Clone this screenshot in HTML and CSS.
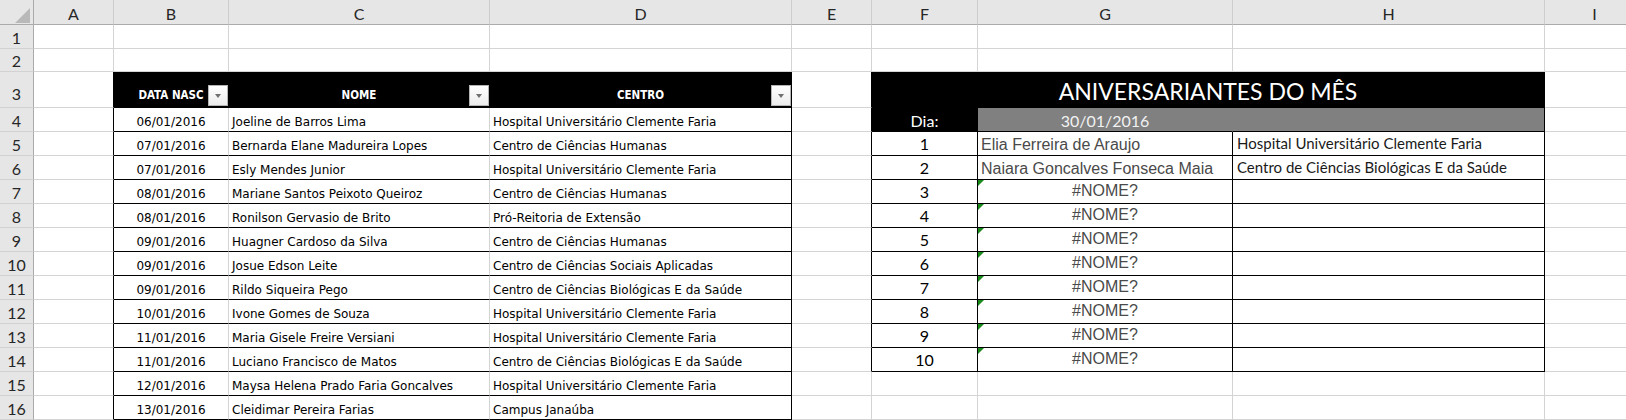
FILE: index.html
```html
<!DOCTYPE html>
<html lang="pt-BR">
<head>
    <meta charset="UTF-8">
    <meta name="viewport" content="width=device-width, initial-scale=1.0">
    <title>Aniversariantes do Mês</title>
    <link rel="stylesheet" href="styles.css">
</head>
<body>
    <div class="sheet">
        <div class="row head">
            <div class="cell corner"></div>
            <div class="cell col">A</div>
            <div class="cell col">B</div>
            <div class="cell col">C</div>
            <div class="cell col">D</div>
            <div class="cell col">E</div>
            <div class="cell col">F</div>
            <div class="cell col">G</div>
            <div class="cell col">H</div>
            <div class="cell col">I</div>
        </div>

        <div class="row">
            <div class="cell num">1</div>
            <div class="cell"></div><div class="cell"></div><div class="cell"></div><div class="cell"></div>
            <div class="cell"></div><div class="cell"></div><div class="cell"></div><div class="cell"></div><div class="cell"></div>
        </div>
        <div class="row short">
            <div class="cell num">2</div>
            <div class="cell"></div><div class="cell"></div><div class="cell"></div><div class="cell"></div>
            <div class="cell"></div><div class="cell"></div><div class="cell"></div><div class="cell"></div><div class="cell"></div>
        </div>

        <div class="row tall">
            <div class="cell num">3</div>
            <div class="cell edge"></div>
            <div class="cell th">DATA NASC<span class="filter"></span></div>
            <div class="cell th">NOME<span class="filter"></span></div>
            <div class="cell th">CENTRO<span class="filter"></span></div>
            <div class="cell edge"></div>
            <div class="cell title">ANIVERSARIANTES DO MÊS</div>
            <div class="cell"></div>
        </div>

        <div class="row">
            <div class="cell num">4</div>
            <div class="cell edge"></div>
            <div class="cell rec date">06/01/2016</div>
            <div class="cell rec">Joeline de Barros Lima</div>
            <div class="cell rec edge">Hospital Universitário Clemente Faria</div>
            <div class="cell edge"></div>
            <div class="cell dia">Dia:</div>
            <div class="cell today">30/01/2016</div>
            <div class="cell today-end"></div>
            <div class="cell"></div>
        </div>
        <div class="row">
            <div class="cell num">5</div>
            <div class="cell edge"></div>
            <div class="cell rec date">07/01/2016</div>
            <div class="cell rec">Bernarda Elane Madureira Lopes</div>
            <div class="cell rec edge">Centro de Ciências Humanas</div>
            <div class="cell edge"></div>
            <div class="cell box pos">1</div>
            <div class="cell box hit">Elia Ferreira de Araujo</div>
            <div class="cell box unit">Hospital Universitário Clemente Faria</div>
            <div class="cell"></div>
        </div>
        <div class="row">
            <div class="cell num">6</div>
            <div class="cell edge"></div>
            <div class="cell rec date">07/01/2016</div>
            <div class="cell rec">Esly Mendes Junior</div>
            <div class="cell rec edge">Hospital Universitário Clemente Faria</div>
            <div class="cell edge"></div>
            <div class="cell box pos">2</div>
            <div class="cell box hit">Naiara Goncalves Fonseca Maia</div>
            <div class="cell box unit">Centro de Ciências Biológicas E da Saúde</div>
            <div class="cell"></div>
        </div>
        <div class="row">
            <div class="cell num">7</div>
            <div class="cell edge"></div>
            <div class="cell rec date">08/01/2016</div>
            <div class="cell rec">Mariane Santos Peixoto Queiroz</div>
            <div class="cell rec edge">Centro de Ciências Humanas</div>
            <div class="cell edge"></div>
            <div class="cell box pos">3</div>
            <div class="cell box err">#NOME?</div>
            <div class="cell box"></div>
            <div class="cell"></div>
        </div>
        <div class="row">
            <div class="cell num">8</div>
            <div class="cell edge"></div>
            <div class="cell rec date">08/01/2016</div>
            <div class="cell rec">Ronilson Gervasio de Brito</div>
            <div class="cell rec edge">Pró-Reitoria de Extensão</div>
            <div class="cell edge"></div>
            <div class="cell box pos">4</div>
            <div class="cell box err">#NOME?</div>
            <div class="cell box"></div>
            <div class="cell"></div>
        </div>
        <div class="row">
            <div class="cell num">9</div>
            <div class="cell edge"></div>
            <div class="cell rec date">09/01/2016</div>
            <div class="cell rec">Huagner Cardoso da Silva</div>
            <div class="cell rec edge">Centro de Ciências Humanas</div>
            <div class="cell edge"></div>
            <div class="cell box pos">5</div>
            <div class="cell box err">#NOME?</div>
            <div class="cell box"></div>
            <div class="cell"></div>
        </div>
        <div class="row">
            <div class="cell num">10</div>
            <div class="cell edge"></div>
            <div class="cell rec date">09/01/2016</div>
            <div class="cell rec">Josue Edson Leite</div>
            <div class="cell rec edge">Centro de Ciências Sociais Aplicadas</div>
            <div class="cell edge"></div>
            <div class="cell box pos">6</div>
            <div class="cell box err">#NOME?</div>
            <div class="cell box"></div>
            <div class="cell"></div>
        </div>
        <div class="row">
            <div class="cell num">11</div>
            <div class="cell edge"></div>
            <div class="cell rec date">09/01/2016</div>
            <div class="cell rec">Rildo Siqueira Pego</div>
            <div class="cell rec edge">Centro de Ciências Biológicas E da Saúde</div>
            <div class="cell edge"></div>
            <div class="cell box pos">7</div>
            <div class="cell box err">#NOME?</div>
            <div class="cell box"></div>
            <div class="cell"></div>
        </div>
        <div class="row">
            <div class="cell num">12</div>
            <div class="cell edge"></div>
            <div class="cell rec date">10/01/2016</div>
            <div class="cell rec">Ivone Gomes de Souza</div>
            <div class="cell rec edge">Hospital Universitário Clemente Faria</div>
            <div class="cell edge"></div>
            <div class="cell box pos">8</div>
            <div class="cell box err">#NOME?</div>
            <div class="cell box"></div>
            <div class="cell"></div>
        </div>
        <div class="row">
            <div class="cell num">13</div>
            <div class="cell edge"></div>
            <div class="cell rec date">11/01/2016</div>
            <div class="cell rec">Maria Gisele Freire Versiani</div>
            <div class="cell rec edge">Hospital Universitário Clemente Faria</div>
            <div class="cell edge"></div>
            <div class="cell box pos">9</div>
            <div class="cell box err">#NOME?</div>
            <div class="cell box"></div>
            <div class="cell"></div>
        </div>
        <div class="row">
            <div class="cell num">14</div>
            <div class="cell edge"></div>
            <div class="cell rec date">11/01/2016</div>
            <div class="cell rec">Luciano Francisco de Matos</div>
            <div class="cell rec edge">Centro de Ciências Biológicas E da Saúde</div>
            <div class="cell edge"></div>
            <div class="cell box pos">10</div>
            <div class="cell box err">#NOME?</div>
            <div class="cell box"></div>
            <div class="cell"></div>
        </div>
        <div class="row">
            <div class="cell num">15</div>
            <div class="cell edge"></div>
            <div class="cell rec date">12/01/2016</div>
            <div class="cell rec">Maysa Helena Prado Faria Goncalves</div>
            <div class="cell rec edge">Hospital Universitário Clemente Faria</div>
            <div class="cell"></div>
            <div class="cell"></div>
            <div class="cell"></div>
            <div class="cell"></div>
            <div class="cell"></div>
        </div>
        <div class="row">
            <div class="cell num">16</div>
            <div class="cell edge"></div>
            <div class="cell rec date">13/01/2016</div>
            <div class="cell rec">Cleidimar Pereira Farias</div>
            <div class="cell rec edge">Campus Janaúba</div>
            <div class="cell"></div>
            <div class="cell"></div>
            <div class="cell"></div>
            <div class="cell"></div>
            <div class="cell"></div>
        </div>
    </div>
</body>
</html>
```

FILE: styles.css
```css
body {
    margin: 0;
    overflow: hidden;
    background-color: #ffffff;
    color: #000000;
    font-family: "DejaVu Sans", sans-serif;
}
.sheet {
    width: 1626px;
    overflow: hidden;
}
.row {
    display: grid;
    grid-template-columns: 34px 80px 115px 261px 302px 80px 106px 255px 312px 100px;
    height: 24px;
}
.row.head {
    height: 25px;
}
.row.short {
    height: 23px;
}
.row.tall {
    height: 36px;
}
.cell {
    box-sizing: border-box;
    display: flex;
    align-items: flex-end;
    min-width: 0;
    overflow: hidden;
    white-space: nowrap;
    border-right: 1px solid #d4d4d4;
    border-bottom: 1px solid #d4d4d4;
}

/* column and row headers */
.corner,
.col,
.num {
    justify-content: center;
    padding-bottom: 1px;
    background-color: #e6e6e6;
    color: #262626;
    font-family: Lato, sans-serif;
    font-size: 16px;
    line-height: 19px;
}
.corner {
    position: relative;
    border-right-color: #ababab;
    border-bottom-color: #ababab;
}
.corner::after {
    content: "";
    position: absolute;
    right: 3px;
    bottom: 1px;
    border-left: 15px solid transparent;
    border-bottom: 15px solid #b9b9b9;
}
.col {
    border-right-color: #cdcdcd;
    border-bottom-color: #ababab;
}
.num {
    border-right-color: #ababab;
    border-bottom-color: #d2d2d2;
}
.tall .num {
    padding-bottom: 4px;
}

/* borders of the two tables */
.edge {
    border-right-color: #000000;
}
.box {
    border-right-color: #000000;
    border-bottom-color: #000000;
}

/* birthday list */
.th {
    position: relative;
    justify-content: center;
    padding-bottom: 5px;
    background-color: #000000;
    border-right-color: #000000;
    border-bottom-color: #000000;
    color: #ffffff;
    font-family: "DejaVu Sans Condensed", "DejaVu Sans", sans-serif;
    font-stretch: condensed;
    font-weight: bold;
    font-size: 11.5px;
    line-height: 14px;
}
.filter {
    position: absolute;
    right: 0;
    bottom: 1px;
    width: 20px;
    height: 21px;
    box-sizing: border-box;
    border: 1px solid #b4b4b4;
    background: linear-gradient(#ffffff, #ececec);
}
.filter::after {
    content: "";
    position: absolute;
    left: 6px;
    top: 8px;
    border-left: 3.5px solid transparent;
    border-right: 3.5px solid transparent;
    border-top: 4px solid #707070;
}
.rec {
    padding: 0 3px 2px 3px;
    border-bottom-color: #000000;
    font-size: 12px;
    line-height: 14px;
}
.date {
    justify-content: center;
}

/* month summary */
.title {
    grid-column: span 3;
    justify-content: center;
    padding-bottom: 2px;
    background-color: #000000;
    border-right-color: #000000;
    border-bottom-color: #000000;
    color: #ffffff;
    font-family: Lato, sans-serif;
    font-size: 23px;
    line-height: 28px;
}
.dia,
.today,
.pos,
.unit {
    padding-bottom: 1px;
    font-family: Lato, sans-serif;
    font-size: 16px;
    line-height: 19px;
}
.dia {
    justify-content: center;
    background-color: #000000;
    border-right-color: #000000;
    border-bottom-color: #000000;
    color: #ffffff;
}
.today {
    justify-content: center;
    background-color: #808080;
    border-right-color: #808080;
    border-bottom-color: #000000;
    color: #f2f2f2;
}
.today-end {
    background-color: #808080;
    border-right-color: #000000;
    border-bottom-color: #000000;
}
.pos {
    justify-content: center;
    padding-bottom: 2px;
}
.unit {
    padding-left: 4px;
    padding-bottom: 2px;
    font-size: 15px;
    color: #1a1a1a;
}
.hit,
.err {
    padding: 0 3px 1px 3px;
    color: #4a4a4a;
    font-family: "Liberation Sans", Arial, sans-serif;
    font-size: 16px;
    line-height: 18px;
}
.err {
    position: relative;
    justify-content: center;
    padding-bottom: 3px;
}
.err::before {
    content: "";
    position: absolute;
    top: 0;
    left: 0;
    border-top: 6px solid #1a8a1a;
    border-right: 6px solid transparent;
}
```
